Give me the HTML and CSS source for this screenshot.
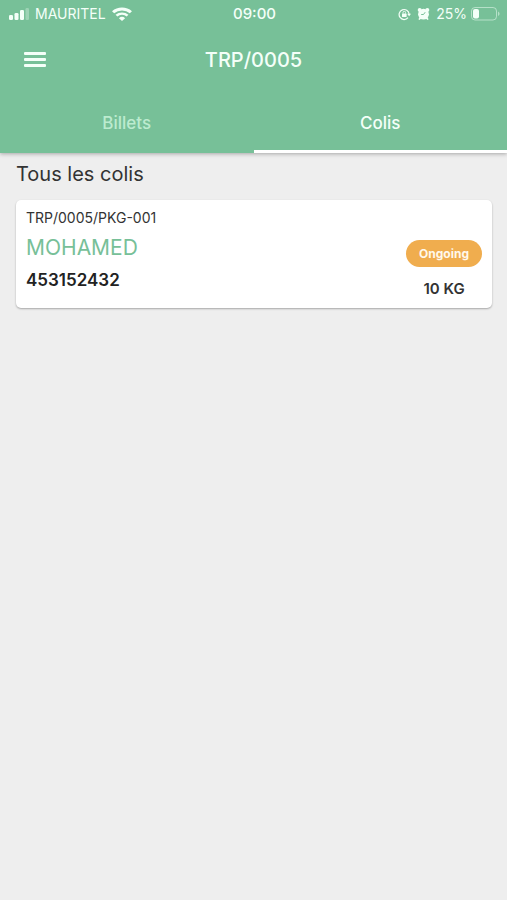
FILE: index.html
```html
<!DOCTYPE html>
<html lang="fr">
<head>
<meta charset="utf-8">
<meta name="viewport" content="width=device-width, initial-scale=1">
<title>TRP/0005</title>
<link rel="stylesheet" href="styles.css">
</head>
<body>
<header class="app-header">
  <div class="status-bar">
    <div class="status-left">
      <svg class="icon" width="20" height="12" viewBox="0 0 20 12" fill="currentColor" aria-hidden="true">
        <rect x="0" y="7" width="4" height="5" rx="1.3"/>
        <rect x="5.5" y="5" width="4" height="7" rx="1.3"/>
        <rect x="11" y="2" width="4" height="10" rx="1.3"/>
        <rect x="16.5" y="0" width="3.5" height="12" rx="1.3" opacity=".3"/>
      </svg>
      <span>MAURITEL</span>
      <svg class="icon" width="20" height="14" viewBox="0 0 18 14" preserveAspectRatio="none" fill="none" stroke="currentColor" aria-hidden="true">
        <path d="M1 5.2a11.6 11.6 0 0 1 16 0" stroke-width="2.8"/>
        <path d="M4 8.6a7.3 7.3 0 0 1 10 0" stroke-width="2.4"/>
        <path d="M9 14 6.2 11.2a4 4 0 0 1 5.6 0z" fill="currentColor" stroke="none"/>
      </svg>
    </div>
    <span class="clock">09:00</span>
    <div class="status-right">
      <svg class="icon" width="13" height="13" viewBox="0 0 13 13" fill="none" stroke="currentColor" aria-hidden="true">
        <path d="M10 9.7A5 5 0 1 1 11.1 6" stroke-width="1.2"/>
        <path d="M9.2 5.7h3.8l-1.9 2.6z" fill="currentColor" stroke="none"/>
        <rect x="4" y="5.6" width="4.6" height="3.4" rx=".6" fill="currentColor" stroke="none"/>
        <path d="M5 5.6v-1a1.3 1.3 0 0 1 2.6 0v1" stroke-width=".9"/>
      </svg>
      <svg class="icon" width="13" height="14" viewBox="0 0 13 14" aria-hidden="true">
        <g fill="currentColor">
          <circle cx="2.7" cy="3" r="2"/><circle cx="10.3" cy="3" r="2"/>
          <circle cx="6.5" cy="7.2" r="5.4"/>
          <path d="m2.6 10-1.2 2.2 1 .8 2.3-1.8zM10.4 10l1.2 2.2-1 .8-2.3-1.8z"/>
        </g>
        <path class="alarm-hands" d="M8.2 5.2 6.5 7.5H4.2"/>
      </svg>
      <span>25%</span>
      <svg class="icon battery" width="29" height="14" viewBox="0 0 29 14" aria-hidden="true">
        <rect x=".5" y=".5" width="25" height="12.5" rx="3.5" fill="none" stroke="currentColor" opacity=".5"/>
        <rect x="2" y="2" width="6" height="9.5" rx="2" fill="currentColor"/>
        <path d="M27 4.5c2 .8 2 3.7 0 4.5z" fill="currentColor" opacity=".5"/>
      </svg>
    </div>
  </div>
  <div class="toolbar">
    <button class="menu-button" type="button" aria-label="Menu">
      <svg width="24" height="16" viewBox="0 0 24 16" fill="currentColor" aria-hidden="true">
        <rect x="1" y="0" width="22" height="3" rx="1"/><rect x="1" y="6" width="22" height="3" rx="1"/><rect x="1" y="12" width="22" height="3" rx="1"/>
      </svg>
    </button>
    <h1 class="title">TRP/0005</h1>
  </div>
  <nav class="tabs">
    <a class="tab" href="#billets">Billets</a>
    <a class="tab active" href="#colis" aria-current="page">Colis</a>
  </nav>
</header>
<main class="content">
  <h2 class="section-title">Tous les colis</h2>
  <article class="card">
    <div class="details">
      <span class="reference">TRP/0005/PKG-001</span>
      <span class="name">MOHAMED</span>
      <span class="phone">453152432</span>
    </div>
    <div class="summary">
      <span class="badge">Ongoing</span>
      <span class="weight">10 KG</span>
    </div>
  </article>
</main>
</body>
</html>
```
FILE: styles.css
```css
* { box-sizing: border-box; }

body {
  margin: 0;
  min-height: 100vh;
  background: #eeeeee;
  color: #333333;
  font-family: Inter, "Liberation Sans", sans-serif;
}

.app-header {
  background: #77c098;
  color: #f4fff8;
  box-shadow: 0 1px 4px rgba(0, 0, 0, .3);
}

.status-bar {
  display: grid;
  grid-template-columns: 1fr auto 1fr;
  align-items: center;
  height: 28px;
  padding: 0 7px 0 9px;
  font-size: 14px;
  line-height: 20px;
}

.icon { display: block; flex: none; }

.status-left,
.status-right {
  display: flex;
  align-items: center;
  gap: 6px;
}

.status-right { justify-content: flex-end; }

.battery { margin-left: -2px; }

.alarm-hands {
  fill: none;
  stroke: #77c098;
  stroke-width: 1;
}

.clock {
  font-size: 15px;
  font-weight: 500;
}

.toolbar {
  display: grid;
  grid-template-columns: 24px 1fr 24px;
  align-items: center;
  height: 64px;
  padding: 0 23px;
}

.menu-button {
  display: flex;
  padding: 0;
  border: 0;
  background: none;
  color: inherit;
}

.title {
  margin: 0;
  font-size: 20px;
  font-weight: 500;
  line-height: 24px;
  text-align: center;
}

.tabs {
  display: grid;
  grid-template-columns: 1fr 1fr;
  height: 61px;
}

.tab {
  display: flex;
  align-items: center;
  justify-content: center;
  border-top: 3px solid transparent;
  border-bottom: 3px solid transparent;
  color: #bcebcf;
  font-size: 17px;
  font-weight: 500;
  line-height: 20px;
  text-decoration: none;
}

.tab.active {
  border-bottom-color: #ffffff;
  color: #f4fff8;
}

.content { padding: 7px 15px 7px 16px; }

.section-title {
  margin: 0 0 12px;
  font-size: 20px;
  font-weight: 400;
  line-height: 28px;
}

.card {
  display: flex;
  justify-content: space-between;
  padding: 8px 10px 9px;
  border-radius: 5px;
  background: #ffffff;
  box-shadow: 0 1px 2px rgba(0, 0, 0, .3);
}

.details {
  display: flex;
  flex-direction: column;
}

.reference {
  font-size: 14px;
  line-height: 20px;
}

.name {
  color: #77c098;
  font-size: 21px;
  line-height: 40px;
}

.phone {
  color: #222222;
  font-size: 17px;
  font-weight: 600;
  line-height: 24px;
}

.summary {
  display: flex;
  flex-direction: column;
  align-items: center;
  gap: 12px;
  padding-top: 32px;
}

.badge {
  padding: 4px 13px;
  border-radius: 14px;
  background: #f0ad4e;
  color: #fff8ea;
  font-size: 12px;
  font-weight: 700;
  line-height: 19px;
}

.weight {
  font-size: 15px;
  font-weight: 600;
  line-height: 20px;
}
```
